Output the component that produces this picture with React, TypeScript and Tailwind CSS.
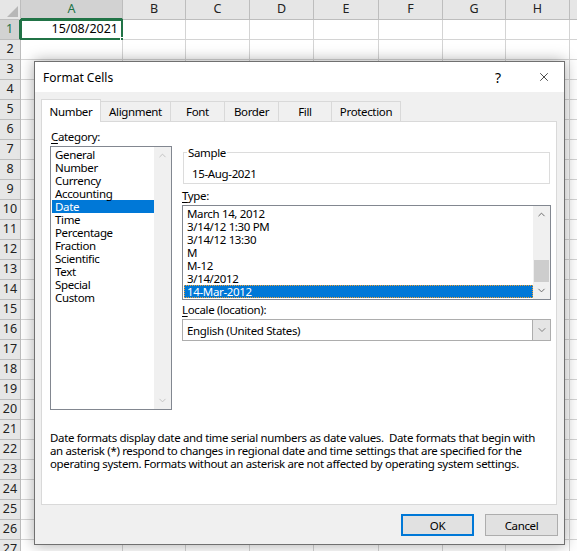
import { X, ChevronDown, ChevronUp } from 'lucide-react';

const columns = [
  { name: 'A', w: 'w-[102px]' },
  { name: 'B', w: 'w-[63px]' },
  { name: 'C', w: 'w-[64px]' },
  { name: 'D', w: 'w-[64px]' },
  { name: 'E', w: 'w-[65px]' },
  { name: 'F', w: 'w-[64px]' },
  { name: 'G', w: 'w-[63px]' },
  { name: 'H', w: 'w-[64px]' },
  { name: 'I', w: 'w-[64px]' },
];

const rows = Array.from({ length: 27 }, (_, i) => i + 1);

const categories = [
  'General',
  'Number',
  'Currency',
  'Accounting',
  'Date',
  'Time',
  'Percentage',
  'Fraction',
  'Scientific',
  'Text',
  'Special',
  'Custom',
];

const dateTypes = [
  'March 14, 2012',
  '3/14/12 1:30 PM',
  '3/14/12 13:30',
  'M',
  'M-12',
  '3/14/2012',
  '14-Mar-2012',
];

const tabs = [
  { label: 'Alignment', w: 'w-[70px]' },
  { label: 'Font', w: 'w-[54px]' },
  { label: 'Border', w: 'w-[54px]' },
  { label: 'Fill', w: 'w-[53px]' },
  { label: 'Protection', w: 'w-[69px]' },
];

function Sheet() {
  return (
    <div className="font-['Noto_Sans',sans-serif] text-[12.5px] text-[#222]">
      {/* column headers */}
      <div className="flex h-[20px]">
        <div className="w-[21px] shrink-0 bg-[#e6e6e6] border-r border-b border-[#bdbdbd] flex items-end justify-end p-[2px]">
          <svg width="11" height="11" viewBox="0 0 11 11">
            <polygon points="11,0 11,11 0,11" fill="#b7b7b7" />
          </svg>
        </div>
        {columns.map((c) => (
          <div
            key={c.name}
            className={`${c.w} shrink-0 flex items-center justify-center border-r ${
              c.name === 'A'
                ? 'bg-[#d2d2d2] text-[#217346] border-b-2 border-b-[#217346] border-r-[#bdbdbd]'
                : 'bg-[#e6e6e6] border-b border-[#bdbdbd]'
            }`}
          >
            {c.name}
          </div>
        ))}
      </div>
      {rows.map((r) => (
        <div key={r} className="flex h-[20px]">
          <div
            className={`w-[21px] shrink-0 flex items-center justify-center border-b border-[#bdbdbd] ${
              r === 1
                ? 'bg-[#d2d2d2] text-[#217346] border-r-2 border-r-[#217346]'
                : 'bg-[#e6e6e6] border-r'
            }`}
          >
            {r}
          </div>
          {columns.map((c) => (
            <div
              key={c.name}
              className={`${c.w} shrink-0 relative border-r border-b border-[#d4d4d4] bg-white`}
            >
              {r === 1 && c.name === 'A' && (
                <>
                  <div className="absolute -left-[1px] -top-[1px] -right-[1px] -bottom-[1px] border-2 border-[#217346] flex items-center justify-end pr-[3px] text-black">
                    15/08/2021
                  </div>
                  <div className="absolute -right-[4px] -bottom-[4px] w-[6px] h-[6px] bg-[#217346] border border-white" />
                </>
              )}
            </div>
          ))}
        </div>
      ))}
    </div>
  );
}

function Scrollbar({ children }: { children: React.ReactNode }) {
  return <div className="w-[17px] shrink-0 bg-[#f0f0f0] flex flex-col">{children}</div>;
}

function FormatCells() {
  return (
    <div className="absolute left-[34px] top-[61px] w-[531px] h-[484px] border border-[#707070] bg-[#f0f0f0] shadow-[0_0_14px_rgba(0,0,0,0.35)] flex flex-col font-['Noto_Sans',sans-serif] text-[11.5px] tracking-[-0.35px] text-black leading-[13px]">
      {/* title bar */}
      <div className="h-[30px] bg-white flex items-center pl-[8px] pr-[13px] text-[12px] tracking-normal">
        <span className="flex-1">Format Cells</span>
        <span className="text-[14px] mr-[36px]">?</span>
        <X className="w-[14px] h-[14px]" strokeWidth={1.2} />
      </div>

      <div className="pl-[6px] pt-[7px]">
        {/* tabs */}
        <div className="flex items-end h-[22px]">
          <div className="relative z-10 w-[60px] h-[23px] -mb-[1px] bg-white border-l border-t border-r border-[#d9d9d9] flex items-center justify-center">
            Number
          </div>
          {tabs.map((t) => (
            <div
              key={t.label}
              className={`${t.w} h-[20px] border-t border-r border-[#d9d9d9] flex items-center justify-center`}
            >
              {t.label}
            </div>
          ))}
        </div>

        {/* panel */}
        <div className="w-[516px] h-[384px] bg-white border border-[#d9d9d9]">
          <div className="flex">
            {/* category */}
            <div className="ml-[8px] pt-[7px] w-[122px]">
              <div className="h-[16px] leading-[16px] pl-[1px]">
                <span className="underline underline-offset-2">C</span>ategory:
              </div>
              <div className="mt-[1px] h-[264px] border border-[#828790] flex">
                <div className="flex-1 pt-[1px] pl-[1px]">
                  {categories.map((c) => (
                    <div
                      key={c}
                      className={`h-[13px] leading-[13px] pl-[3px] ${c === 'Date' ? 'bg-[#0078d7] text-white' : ''}`}
                    >
                      {c}
                    </div>
                  ))}
                </div>
                <Scrollbar>
                  <div className="h-[17px] flex items-center justify-center text-[#c0c0c0]">
                    <ChevronUp className="w-[11px] h-[11px]" strokeWidth={2} />
                  </div>
                  <div className="flex-1" />
                  <div className="h-[17px] flex items-center justify-center text-[#c0c0c0]">
                    <ChevronDown className="w-[11px] h-[11px]" strokeWidth={2} />
                  </div>
                </Scrollbar>
              </div>
            </div>

            {/* right side */}
            <div className="ml-[10px] pt-[30px] w-[369px]">
              <div className="relative ml-[1px] w-[367px] h-[32px] border border-[#dcdcdc] pl-[8px] pt-[14px]">
                <span className="absolute -top-[7px] left-[3px] bg-white px-[1px]">Sample</span>
                15-Aug-2021
              </div>

              <div className="mt-[4px] h-[17px] leading-[16px]">
                <span className="underline underline-offset-2">T</span>ype:
              </div>
              <div className="h-[95px] border border-[#828790] flex">
                <div className="flex-1 pt-[1px] pl-[1px]">
                  {dateTypes.map((d) => (
                    <div
                      key={d}
                      className={`h-[13px] leading-[13px] pl-[3px] ${
                        d === '14-Mar-2012'
                          ? 'bg-[#0078d7] text-white outline outline-1 outline-dotted outline-[#f0a030] -outline-offset-1'
                          : ''
                      }`}
                    >
                      {d}
                    </div>
                  ))}
                </div>
                <Scrollbar>
                  <div className="h-[17px] flex items-center justify-center text-[#606060]">
                    <ChevronUp className="w-[11px] h-[11px]" strokeWidth={2} />
                  </div>
                  <div className="flex-1 flex flex-col justify-end px-[1px]">
                    <div className="h-[22px] bg-[#cdcdcd]" />
                  </div>
                  <div className="h-[17px] flex items-center justify-center text-[#606060]">
                    <ChevronDown className="w-[11px] h-[11px]" strokeWidth={2} />
                  </div>
                </Scrollbar>
              </div>

              <div className="mt-[2px] h-[17px] leading-[16px]">
                <span className="underline underline-offset-2">L</span>ocale (location):
              </div>
              <div className="h-[22px] border border-[#adadad] flex items-center">
                <span className="flex-1 pl-[4px]">English (United States)</span>
                <div className="w-[18px] h-[20px] bg-[#e5e5e5] border-l border-[#adadad] flex items-center justify-center text-[#606060]">
                  <ChevronDown className="w-[12px] h-[12px]" strokeWidth={1.5} />
                </div>
              </div>
            </div>
          </div>

          <p className="mt-[21px] pl-[8px] whitespace-nowrap">
            Date formats display date and time serial numbers as date values.&nbsp; Date formats that begin with
            <br />
            an asterisk (*) respond to changes in regional date and time settings that are specified for the
            <br />
            operating system. Formats without an asterisk are not affected by operating system settings.
          </p>
        </div>
      </div>

      {/* buttons */}
      <div className="mt-[9px] flex justify-end gap-[11px] pr-[6px]">
        <button className="w-[73px] h-[22px] bg-[#e1e1e1] border-2 border-[#0078d7] flex items-center justify-center">
          OK
        </button>
        <button className="w-[73px] h-[22px] bg-[#e1e1e1] border border-[#adadad] flex items-center justify-center">
          Cancel
        </button>
      </div>
    </div>
  );
}

export default function App() {
  return (
    <div className="relative w-[577px] h-[551px] overflow-hidden bg-white">
      <Sheet />
      <FormatCells />
    </div>
  );
}
